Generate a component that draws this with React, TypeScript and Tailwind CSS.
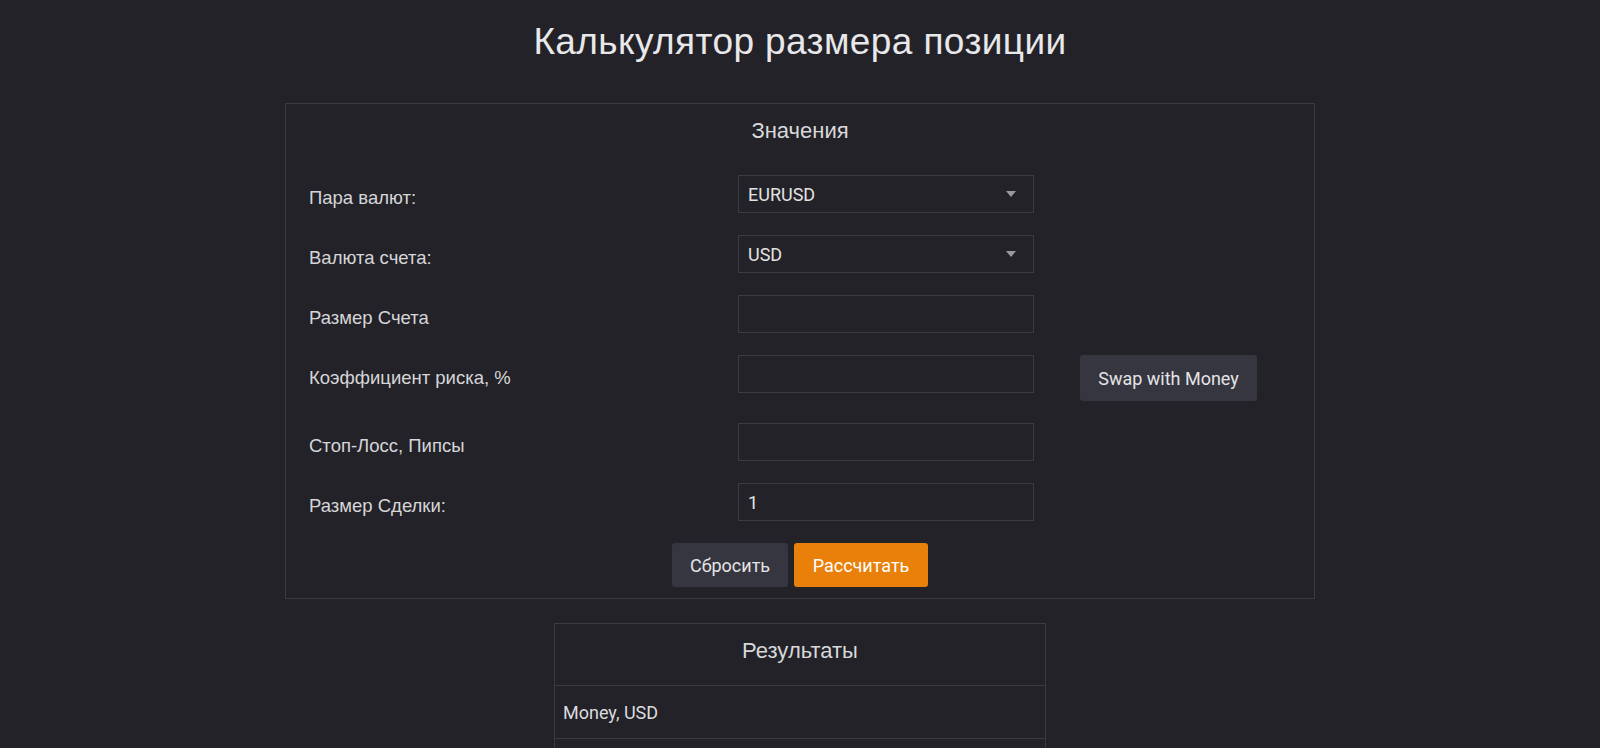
import React from "react";

const fields = [
  { label: "Пара валют:", kind: "select", value: "EURUSD" },
  { label: "Валюта счета:", kind: "select", value: "USD" },
  { label: "Размер Счета", kind: "input", value: "" },
  { label: "Коэффициент риска, %", kind: "input", value: "", swap: true },
  { label: "Стоп-Лосс, Пипсы", kind: "input", value: "" },
  { label: "Размер Сделки:", kind: "input", value: "1" },
];

const results = ["Money, USD", ""];

const SelectBox = ({ value }: { value: string }) => (
  <div className="h-[38px] w-[296px] border border-[#3a3a41] flex items-center justify-between pl-[9px] pr-[17px] font-['Roboto',sans-serif] text-[18px] text-[#e2e2e2]">
    <span>{value}</span>
    <svg width="10" height="6" viewBox="0 0 10 6">
      <path d="M0 0 L10 0 L5 6 Z" fill="#9a9a9e" />
    </svg>
  </div>
);

const TextBox = ({ value }: { value: string }) => (
  <input
    defaultValue={value}
    className="h-[38px] w-[296px] border border-[#3a3a41] bg-transparent pl-[9px] font-['Roboto',sans-serif] text-[18px] text-[#e2e2e2] outline-none"
  />
);

const App = () => {
  return (
    <div className="min-h-screen bg-[#232228] font-['Liberation_Sans',Arial,sans-serif] text-[#d6d6d8]">
      <h1 className="pt-[20px] text-center text-[37px] leading-[44px] tracking-[0.4px] text-[#e8e8ea]">
        Калькулятор размера позиции
      </h1>

      <div className="mt-[39px] mx-auto w-[1030px] border border-[#3a3a41] pt-[14px] pb-[11px]">
        <h2 className="text-center text-[22px] leading-[26px] text-[#d8d8da]">Значения</h2>

        <div className="mt-[31px] flex flex-col gap-[22px] pl-[23px]">
          {fields.map((f) => (
            <div key={f.label} className="flex items-start">
              <label className="w-[429px] pt-[11px] text-[18.5px] leading-[24px]">{f.label}</label>
              {f.kind === "select" ? <SelectBox value={f.value} /> : <TextBox value={f.value} />}
              {f.swap && (
                <button className="ml-[46px] h-[46px] w-[177px] rounded-[3px] bg-[#363640] font-['Roboto',sans-serif] text-[18px] text-[#e4e4e6]">
                  Swap with Money
                </button>
              )}
            </div>
          ))}
        </div>

        <div className="mt-[22px] flex justify-center gap-[6px] font-['Roboto',sans-serif] text-[18px]">
          <button className="h-[44px] w-[116px] rounded-[3px] bg-[#363640] text-[#e4e4e6]">Сбросить</button>
          <button className="h-[44px] w-[134px] rounded-[3px] bg-[#e8800a] text-white">Рассчитать</button>
        </div>
      </div>

      <div className="mt-[24px] mx-auto w-[492px] border border-[#3a3a41]">
        <div className="pt-[14px] pb-[21px] text-center text-[22px] leading-[26px] text-[#d8d8da]">
          Результаты
        </div>
        {results.map((r, i) => (
          <div
            key={i}
            className="h-[53px] border-t border-[#3a3a41] flex items-center pl-[8px] font-['Roboto',sans-serif] text-[18px] text-[#dcdcde]"
          >
            {r}
          </div>
        ))}
      </div>
    </div>
  );
};

export default App;
